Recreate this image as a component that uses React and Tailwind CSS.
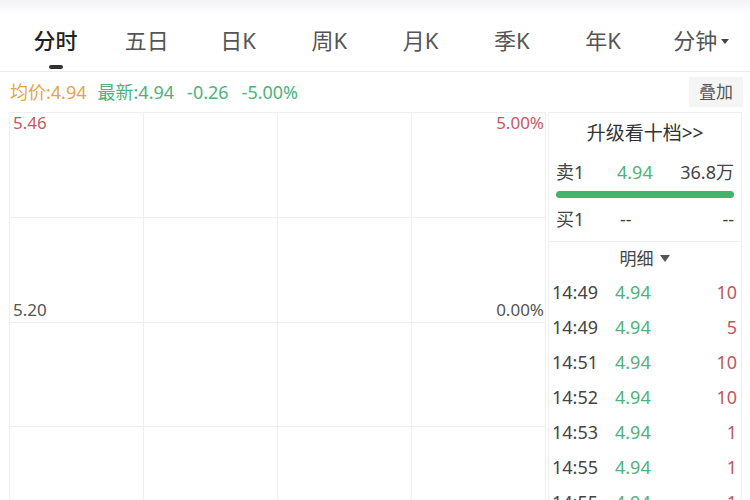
const tabs = ['分时', '五日', '日K', '周K', '月K', '季K', '年K'];

const ticks = [
  { t: '14:49', p: '4.94', v: '10' },
  { t: '14:49', p: '4.94', v: '5' },
  { t: '14:51', p: '4.94', v: '10' },
  { t: '14:52', p: '4.94', v: '10' },
  { t: '14:53', p: '4.94', v: '1' },
  { t: '14:55', p: '4.94', v: '1' },
  { t: '14:55', p: '4.94', v: '1' },
];

const font = { fontFamily: '"Noto Sans", "Noto Sans CJK SC", sans-serif' };

export default function App() {
  return (
    <div className="w-[750px] h-[500px] overflow-hidden bg-white text-[#333]" style={font}>
      {/* top strip */}
      <div className="h-[14px] bg-gradient-to-b from-[#f3f3f6] to-white" />

      {/* tabs */}
      <div className="h-[58px] flex px-[10px] border-b border-[#ededed]">
        {tabs.map((t, i) => (
          <div key={t} className="flex-1 flex flex-col items-center pt-[10px]">
            <span className={`text-[22px] leading-[32px] ${i === 0 ? 'text-[#222] font-medium' : 'text-[#555]'}`}>{t}</span>
            {i === 0 && <div className="mt-[9px] w-[14px] h-[4px] rounded-full bg-[#333]" />}
          </div>
        ))}
        <div className="flex-1 flex justify-center pt-[10px]">
          <div className="flex ml-[14px]">
            <span className="text-[22px] leading-[32px] text-[#555]">分钟</span>
            <span className="ml-[4px] mt-[15px] w-0 h-0 border-x-[4px] border-x-transparent border-t-[5px] border-t-[#444]" />
          </div>
        </div>
      </div>

      {/* info row */}
      <div className="h-[40px] flex items-center pl-[10px] pr-[7px] text-[18px]">
        <span className="text-[#e2a646]">均价:4.94</span>
        <span className="ml-[11px] text-[#4db37c]">最新:4.94</span>
        <span className="ml-[13px] text-[#4db37c]">-0.26</span>
        <span className="ml-[13px] text-[#4db37c]">-5.00%</span>
        <span className="ml-auto h-[30px] px-[10px] flex items-center bg-[#f5f5f5] text-[#555] text-[17px]">叠加</span>
      </div>

      {/* body */}
      <div className="flex pl-[9px]">
        {/* chart */}
        <div className="relative w-[537px] h-[420px]">
          <div className="grid grid-cols-4 grid-rows-4 h-full border-l border-t border-[#efefef]">
            {Array.from({ length: 16 }).map((_, i) => (
              <div key={i} className="border-r border-b border-[#efefef]" />
            ))}
          </div>
          <span className="absolute left-[4px] top-[-2px] text-[17px] text-[#c4585f]">5.46</span>
          <span className="absolute right-[2px] top-[-2px] text-[17px] text-[#c4585f]">5.00%</span>
          <span className="absolute left-[4px] top-[185px] text-[17px] text-[#555]">5.20</span>
          <span className="absolute right-[2px] top-[185px] text-[17px] text-[#555]">0.00%</span>
        </div>

        {/* right panel */}
        <div className="ml-[2px] w-[194px] flex flex-col">
          <div className="border border-[#efefef] px-[7px]">
            <div className="h-[41px] flex items-center justify-center text-[19px] text-[#333]">升级看十档&gt;&gt;</div>
            <div className="flex items-center h-[37px] text-[18px]">
              <span className="w-[61px] text-[#444]">卖1</span>
              <span className="text-[#4db37c]">4.94</span>
              <span className="ml-auto text-[#444]">36.8万</span>
            </div>
            <div className="h-[7px] rounded-full bg-[#41b56c]" />
            <div className="flex items-center h-[43px] text-[18px] text-[#444]">
              <span className="w-[64px]">买1</span>
              <span>--</span>
              <span className="ml-auto">--</span>
            </div>
          </div>
          <div className="border-x border-[#efefef] pl-[3px] pr-[4px]">
            <div className="h-[33px] flex items-center justify-center text-[17px] text-[#444]">
              明细
              <span className="ml-[6px] w-0 h-0 border-x-[5px] border-x-transparent border-t-[7px] border-t-[#555]" />
            </div>
            {ticks.map((r, i) => (
              <div key={i} className="h-[35px] flex items-center text-[18px]">
                <span className="w-[63px] text-[#444]">{r.t}</span>
                <span className="text-[#4db37c]">{r.p}</span>
                <span className="ml-auto text-[#c0575c]">{r.v}</span>
              </div>
            ))}
          </div>
        </div>
      </div>
    </div>
  );
}
